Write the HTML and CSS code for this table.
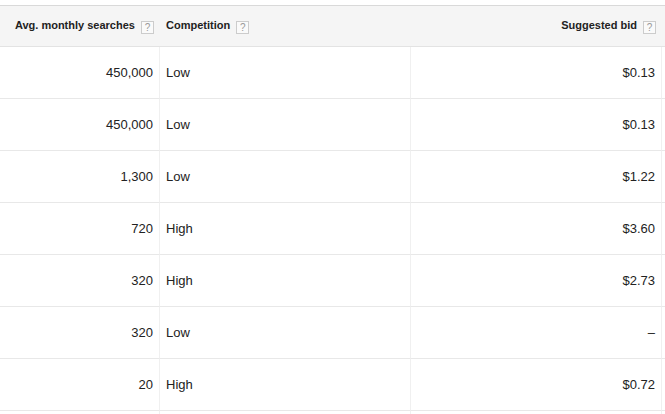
FILE: index.html
```html
<!DOCTYPE html>
<html lang="en">
<head>
  <meta charset="UTF-8">
  <meta name="viewport" content="width=device-width, initial-scale=1.0">
  <title>Keyword ideas</title>
  <link rel="stylesheet" href="styles.css">
</head>
<body>
  <table class="ideas">
    <colgroup>
      <col class="col-searches">
      <col class="col-competition">
      <col class="col-bid">
      <col class="col-more">
    </colgroup>
    <thead>
      <tr>
        <th class="num">Avg. monthly searches <span class="help">?</span></th>
        <th>Competition <span class="help">?</span></th>
        <th class="num">Suggested bid <span class="help">?</span></th>
        <th class="edge"></th>
      </tr>
    </thead>
    <tbody>
      <tr><td class="num">450,000</td><td>Low</td><td class="num">$0.13</td><td class="edge"></td></tr>
      <tr><td class="num">450,000</td><td>Low</td><td class="num">$0.13</td><td class="edge"></td></tr>
      <tr><td class="num">1,300</td><td>Low</td><td class="num">$1.22</td><td class="edge"></td></tr>
      <tr><td class="num">720</td><td>High</td><td class="num">$3.60</td><td class="edge"></td></tr>
      <tr><td class="num">320</td><td>High</td><td class="num">$2.73</td><td class="edge"></td></tr>
      <tr><td class="num">320</td><td>Low</td><td class="num">&ndash;</td><td class="edge"></td></tr>
      <tr><td class="num">20</td><td>High</td><td class="num">$0.72</td><td class="edge"></td></tr>
      <tr><td></td><td></td><td></td><td class="edge"></td></tr>
    </tbody>
  </table>
</body>
</html>
```

FILE: styles.css
```css
/* page */
body {
  margin: 0;
  background: #fff;
  font-family: "Liberation Sans", Arial, sans-serif;
  color: #222;
  overflow: hidden;
}
/* keyword table */
.ideas {
  margin-top: 5px;
  width: 665px;
  table-layout: fixed;
  border-collapse: separate;
  border-spacing: 0;
}
.col-searches { width: 160px; }
.col-competition { width: 251px; }
.col-bid { width: 251px; }
.col-more { width: 3px; }
.ideas th {
  height: 40px;
  padding: 0 6px;
  background: #f5f5f5;
  border-top: 1px solid #d9d9d9;
  border-bottom: 1px solid #e3e3e3;
  font-size: 11px;
  font-weight: bold;
  text-align: left;
  white-space: nowrap;
  vertical-align: middle;
}
.ideas td {
  height: 51px;
  padding: 0 6px;
  border-bottom: 1px solid #e8e8e8;
  border-right: 1px solid #f0f0f0;
  font-size: 13px;
  vertical-align: middle;
  white-space: nowrap;
}
.ideas .num {
  text-align: right;
}
.ideas .edge {
  padding: 0;
  border-right: none;
}
/* help box */
.help {
  display: inline-block;
  width: 11px;
  height: 11px;
  margin-left: 3px;
  border: 1px solid #ccc;
  background: #fafafa;
  color: #999;
  font-size: 10px;
  font-weight: normal;
  line-height: 11px;
  text-align: center;
  vertical-align: -2px;
}
```
